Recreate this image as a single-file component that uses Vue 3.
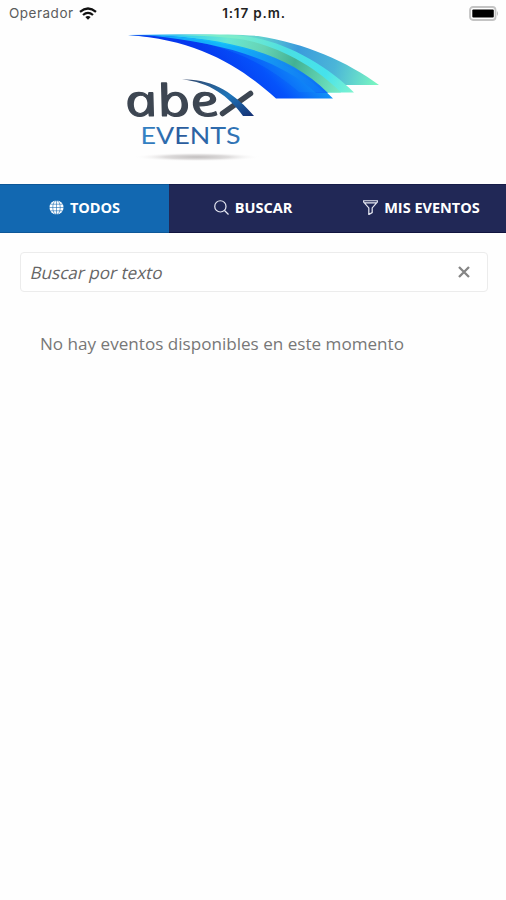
<template>
  <div class="app">
    <!-- status bar -->
    <div class="status">
      <div class="carrier">
        <span class="operator">Operador</span>
        <svg class="wifi" viewBox="0 0 18 13">
          <g fill="none" stroke="#111" stroke-width="2.3">
            <path d="M1 4.8Q9 -1.8 17 4.8" />
            <path d="M4 8Q9 3.7 14 8" />
          </g>
          <path d="M6.3 10Q9 7.8 11.7 10L9 12.8Z" fill="#111" />
        </svg>
      </div>
      <span class="time">1:17 p.m.</span>
      <svg class="battery" viewBox="0 0 30 15">
        <rect x="1" y="1" width="25.5" height="13" rx="3" fill="#fff" stroke="#c4c4c4" stroke-width="1.8" />
        <rect x="3.3" y="3.4" width="21.5" height="8.2" rx="1" fill="#000" />
        <path d="M28 5Q30 7.5 28 10Z" fill="#bbb" />
      </svg>
    </div>

    <!-- logo -->
    <header class="brand">
      <svg class="logo" viewBox="120 28 270 140">
        <defs>
          <linearGradient id="back" gradientUnits="userSpaceOnUse" x1="160" y1="36" x2="375" y2="88">
            <stop offset="0" stop-color="#2cb4f5" />
            <stop offset="0.25" stop-color="#7deccb" />
            <stop offset="0.45" stop-color="#5fcfd0" />
            <stop offset="0.62" stop-color="#3b9bdc" />
            <stop offset="0.8" stop-color="#4bb5d8" />
            <stop offset="1" stop-color="#79f5c2" />
          </linearGradient>
          <linearGradient id="mint" gradientUnits="userSpaceOnUse" x1="170" y1="36" x2="348" y2="92">
            <stop offset="0" stop-color="#22c8fa" />
            <stop offset="0.3" stop-color="#6ae8d2" />
            <stop offset="0.5" stop-color="#66d3b4" />
            <stop offset="0.68" stop-color="#43b193" />
            <stop offset="1" stop-color="#7df3cf" />
          </linearGradient>
          <linearGradient id="cyan" gradientUnits="userSpaceOnUse" x1="235" y1="40" x2="353" y2="92">
            <stop offset="0" stop-color="#7deccb" />
            <stop offset="0.4" stop-color="#4adfe2" />
            <stop offset="0.75" stop-color="#46e2ec" />
            <stop offset="1" stop-color="#7df3cf" />
          </linearGradient>
          <linearGradient id="front" gradientUnits="userSpaceOnUse" x1="240" y1="95" x2="290" y2="50">
            <stop offset="0" stop-color="#0638ee" />
            <stop offset="0.5" stop-color="#0553fb" />
            <stop offset="1" stop-color="#1294f5" />
          </linearGradient>
          <linearGradient id="edge" gradientUnits="userSpaceOnUse" x1="165" y1="36" x2="320" y2="90">
            <stop offset="0" stop-color="#15a5fa" />
            <stop offset="0.35" stop-color="#14c3fb" />
            <stop offset="0.7" stop-color="#168ff0" />
            <stop offset="1" stop-color="#0c6ff8" />
          </linearGradient>
          <linearGradient id="stroke" x1="0" y1="0" x2="1" y2="1">
            <stop offset="0" stop-color="#34476a" />
            <stop offset="0.55" stop-color="#1e75ba" />
            <stop offset="1" stop-color="#152f72" />
          </linearGradient>
          <linearGradient id="events" x1="0" y1="0" x2="1" y2="0">
            <stop offset="0" stop-color="#3485c8" />
            <stop offset="0.4" stop-color="#2a5b9c" />
            <stop offset="1" stop-color="#3176b8" />
          </linearGradient>
          <radialGradient id="shade">
            <stop offset="0" stop-color="#c2bfbf" />
            <stop offset="0.5" stop-color="#dedcdc" />
            <stop offset="1" stop-color="#fff" stop-opacity="0" />
          </radialGradient>
        </defs>

        <!-- wing, back to front -->
        <path d="M128 35C185 34 230 34 258 36C305 43 348 62 379 85H338C300 58 235 42 128 35Z" fill="url(#back)" />
        <path d="M180 36C205 35 238 34 256 38C292 45 331 69 354 92.500H322C285 62 230 45 180 36Z" fill="url(#cyan)" />
        <path d="M160 36C205 35 232 37 250 41C284 49 318 69 341 92.500H322C285 62 230 45 160 36Z" fill="url(#mint)" />
        <path d="M128 35C210 35 286 49 333 98.500H276C241 67 199 40 128 35Z" fill="url(#front)" />
        <path d="M150 35.500C219 37 286 50 328 93H316C281 60 224 43 150 35.500Z" fill="url(#edge)" />
        <path d="M178 38.500C224 45 262 60 299 92H324C283 55 232 42 178 38.500Z" fill="#1595f8" opacity="0.250" />

        <!-- upright shapes from the italic cut, for the one-storey a -->
        <text class="word" transform="translate(128.500 115.500) skewX(17)" textLength="94" lengthAdjust="spacingAndGlyphs">abe</text>
        <path d="M222.500 113.500L250.500 93.500" stroke="#3d4652" stroke-width="5.500" stroke-linecap="round" />
        <path d="M182 79.500C211 78 235 93 254 116H243C229 96 209 82 182 79.500Z" fill="url(#stroke)" />

        <text class="events" x="140.500" y="143.500" textLength="100" lengthAdjust="spacingAndGlyphs" fill="url(#events)">EVENTS</text>
        <ellipse cx="197" cy="157" rx="64" ry="4.500" fill="url(#shade)" />
      </svg>
    </header>

    <!-- tabs -->
    <nav class="tabs">
      <button
        v-for="tab in tabs"
        :key="tab.id"
        class="tab"
        :class="[tab.id, { active: tab.id === current }]"
        @click="current = tab.id"
      >
        <svg v-if="tab.id === 'todos'" class="icon" viewBox="0 0 16 16">
          <circle cx="8" cy="8" r="7.500" fill="#fff" />
          <g fill="none" stroke="#1268b1" stroke-width="0.600">
            <ellipse cx="8" cy="8" rx="4" ry="7.500" />
            <path d="M8 0V16M0 8H16M1.500 4.500H14.500M1.500 11.500H14.500" />
          </g>
        </svg>
        <svg v-else-if="tab.id === 'buscar'" class="icon" viewBox="0 0 16 16">
          <circle cx="6.800" cy="6.800" r="6" />
          <path d="M11.200 11.200L15.500 15.500" />
        </svg>
        <svg v-else class="icon" viewBox="0 0 16 16">
          <path d="M0.700 0.800H15.300V2.200L9.800 8.500V13.500L6.200 15.500V8.500L0.700 2.200ZM1.500 3H14.500" />
        </svg>
        <span class="label">{{ tab.label }}</span>
      </button>
    </nav>

    <main class="content">
      <div class="search">
        <input v-model="query" class="input" type="text" placeholder="Buscar por texto" />
        <button class="clear" aria-label="Borrar" @click="query = ''">
          <svg viewBox="0 0 12 12">
            <path d="M1 1L11 11M11 1L1 11" fill="none" stroke="#858585" stroke-width="2.300" />
          </svg>
        </button>
      </div>
      <p class="empty">No hay eventos disponibles en este momento</p>
    </main>
  </div>
</template>

<script setup>
import { ref } from 'vue'

const tabs = [
  { id: 'todos', label: 'TODOS' },
  { id: 'buscar', label: 'BUSCAR' },
  { id: 'mis', label: 'MIS EVENTOS' }
]

const current = ref('todos')
const query = ref('')
</script>

<style>
body {
  background: #fff;
}
</style>

<style scoped>
.app {
  min-height: 900px;
  background: #fefefe;
  font-family: 'Open Sans', 'Noto Sans', sans-serif;
}

.status {
  display: grid;
  grid-template-columns: 1fr auto 1fr;
  align-items: center;
  height: 28px;
  padding: 0 7px 2px 9px;
  box-sizing: border-box;
  font-family: Inter, 'Liberation Sans', sans-serif;
  font-size: 13.5px;
  line-height: 20px;
}

.carrier {
  display: flex;
  align-items: center;
  gap: 5px;
}

.operator {
  color: #5c5c5c;
  letter-spacing: 0.5px;
}

.wifi {
  width: 18px;
  height: 13px;
}

.time {
  color: #222;
  font-weight: 600;
  letter-spacing: 0.85px;
}

.battery {
  width: 30px;
  height: 15px;
  justify-self: end;
}

.brand {
  height: 156px;
  padding-left: 120px;
  box-sizing: border-box;
}

.logo {
  display: block;
  width: 270px;
  height: 140px;
  overflow: visible;
}

.word {
  font-family: 'Open Sans', sans-serif;
  font-size: 43.5px;
  font-style: italic;
  font-weight: 400;
  fill: #3d4652;
  stroke: #3d4652;
  stroke-width: 1.2;
  stroke-linejoin: round;
}

.events {
  font-family: Lato, sans-serif;
  font-size: 22.5px;
}

.tabs {
  display: grid;
  grid-template-columns: 169px 168px 169px;
  height: 49px;
}

.tab {
  display: flex;
  align-items: center;
  justify-content: center;
  gap: 6px;
  padding: 0 0 2px;
  border: 0;
  border-top: 1px solid #171c48;
  border-bottom: 1px solid #10143f;
  background: #212856;
  color: #fff;
  font-family: inherit;
  font-size: 14.5px;
  font-weight: 700;
  white-space: nowrap;
}

.tab.active {
  background: #1268b1;
  border-color: #0d5798;
}

.icon {
  width: 15px;
  height: 15px;
  fill: none;
  stroke: #e6e8f2;
  stroke-width: 1.3;
}

.todos .icon {
  stroke: none;
}

.content {
  padding: 19px 18px 0 20px;
}

.search {
  display: flex;
  align-items: center;
  height: 40px;
  padding: 0 17px 0 10px;
  box-sizing: border-box;
  border: 1px solid #ececec;
  border-radius: 4px;
  background: #fff;
}

/* slanted roman rather than the italic cut */
.input {
  flex: 1;
  min-width: 0;
  padding: 0;
  border: 0;
  outline: 0;
  background: none;
  font-family: inherit;
  font-size: 17.1px;
  transform: skewX(-13deg);
}

.input::placeholder {
  color: #666;
  opacity: 1;
}

.clear {
  display: flex;
  padding: 0;
  border: 0;
  background: none;
}

.clear svg {
  width: 12px;
  height: 12px;
}

.empty {
  margin: 40px 0 0 20px;
  color: #777;
  font-size: 17.1px;
  line-height: 24px;
}
</style>
